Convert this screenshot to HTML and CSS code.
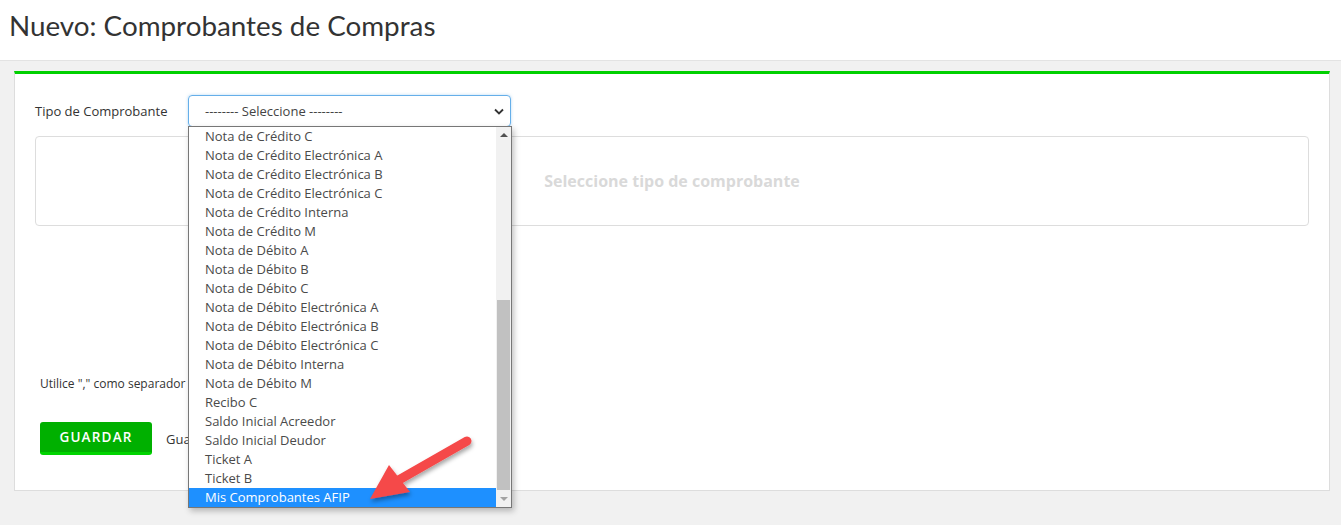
FILE: index.html
```html
<!DOCTYPE html>
<html lang="es">
<head>
    <meta charset="UTF-8">
    <title>Nuevo: Comprobantes de Compras</title>
    <link rel="stylesheet" href="styles.css">
</head>
<body>
    <div class="page-header">
        <h1>Nuevo: Comprobantes de Compras</h1>
    </div>
    <div class="content">
        <div class="box">
            <div class="form-row">
                <label class="form-label">Tipo de Comprobante</label>
                <div class="select-wrap">
                    <div class="select-box">
                        <span>-------- Seleccione --------</span>
                        <svg class="chevron" width="10" height="7" viewBox="0 0 10 7"><path d="M1 1.5 L5 5.5 L9 1.5" fill="none" stroke="#333" stroke-width="1.8"/></svg>
                    </div>
                    <div class="select-list">
                        <ul class="options">
                            <li>Nota de Crédito C</li>
                            <li>Nota de Crédito Electrónica A</li>
                            <li>Nota de Crédito Electrónica B</li>
                            <li>Nota de Crédito Electrónica C</li>
                            <li>Nota de Crédito Interna</li>
                            <li>Nota de Crédito M</li>
                            <li>Nota de Débito A</li>
                            <li>Nota de Débito B</li>
                            <li>Nota de Débito C</li>
                            <li>Nota de Débito Electrónica A</li>
                            <li>Nota de Débito Electrónica B</li>
                            <li>Nota de Débito Electrónica C</li>
                            <li>Nota de Débito Interna</li>
                            <li>Nota de Débito M</li>
                            <li>Recibo C</li>
                            <li>Saldo Inicial Acreedor</li>
                            <li>Saldo Inicial Deudor</li>
                            <li>Ticket A</li>
                            <li>Ticket B</li>
                            <li class="selected">Mis Comprobantes AFIP</li>
                        </ul>
                        <div class="scrollbar">
                            <div class="scroll-up"></div>
                            <div class="scroll-track"><div class="scroll-thumb"></div></div>
                            <div class="scroll-down"></div>
                        </div>
                    </div>
                </div>
            </div>

            <div class="placeholder-box">Seleccione tipo de comprobante</div>

            <p class="hint">Utilice "," como separador decimal</p>

            <div class="actions">
                <button class="btn-save">GUARDAR</button>
                <span class="save-note">Guardar y crear otro</span>
            </div>
        </div>
    </div>

    <!-- annotation arrow -->
    <svg class="annotation" width="130" height="80" viewBox="0 0 130 80">
        <defs>
            <filter id="shadow" x="-20%" y="-20%" width="140%" height="150%">
                <feDropShadow dx="1" dy="3" stdDeviation="2" flood-color="#000" flood-opacity="0.35"/>
            </filter>
        </defs>
        <g filter="url(#shadow)">
            <line x1="105" y1="10" x2="35" y2="50" stroke="#f54848" stroke-width="9" stroke-linecap="round"/>
            <polygon points="8,68 27,34 48,61" fill="#f54848"/>
        </g>
    </svg>
</body>
</html>
```

FILE: styles.css
```css
html, body {
    min-height: 525px;
}

body {
    margin: 0;
    background-color: #f1f1f1;
    font-family: "Open Sans", Arial, sans-serif;
    color: #333;
    position: relative;
}

.page-header {
    background: white;
    height: 60px;
    border-bottom: 1px solid #e3e3e3;
}

.page-header h1 {
    margin: 0;
    padding: 9px 0 0 9px;
    font-family: Lato, "Open Sans", sans-serif;
    font-weight: normal;
    font-size: 27.8px;
    color: #333;
}

.content {
    padding: 10px 11px 34px 14px;
}

.box {
    background: white;
    border: 1px solid #ddd;
    border-top: 3px solid #00d000;
    padding: 21px 20px 0 20px;
    height: 420px;
    box-sizing: border-box;
}

.form-row {
    display: flex;
    align-items: center;
}

.form-label {
    width: 153px;
    font-size: 13px;
    color: #333;
}

.select-wrap {
    position: relative;
    width: 323px;
}

.select-box {
    height: 30px;
    border: 1px solid #66afe9;
    border-radius: 4px;
    box-shadow: 0 0 3px rgba(102, 175, 233, 0.5);
    display: flex;
    align-items: center;
    justify-content: space-between;
    padding: 0 6px 0 16px;
    font-size: 13px;
    color: #444;
}

.select-list {
    position: absolute;
    top: 31px;
    left: 0;
    width: 322px;
    border: 1px solid #777;
    background: white;
    box-shadow: 2px 3px 6px rgba(0, 0, 0, 0.25);
    display: flex;
    z-index: 5;
}

.options {
    list-style: none;
    margin: 0;
    padding: 0;
    flex: 1;
}

.options li {
    height: 19px;
    line-height: 19px;
    padding-left: 16px;
    font-size: 13px;
    color: #4a4a4a;
}

.options li.selected {
    background-color: #1e90ff;
    color: white;
}

.scrollbar {
    width: 15px;
    background: #f1f1f1;
    display: flex;
    flex-direction: column;
}

.scroll-up,
.scroll-down {
    height: 17px;
    position: relative;
}

.scroll-up::after,
.scroll-down::after {
    content: "";
    position: absolute;
    left: 4px;
    border-left: 4px solid transparent;
    border-right: 4px solid transparent;
}

.scroll-up::after {
    top: 6px;
    border-bottom: 4px solid #505050;
}

.scroll-down::after {
    top: 7px;
    border-top: 4px solid #a3a3a3;
}

.scroll-track {
    flex: 1;
    display: flex;
    flex-direction: column;
    justify-content: flex-end;
    padding: 0 1px;
}

.scroll-thumb {
    height: 190px;
    background: #c1c1c1;
}

.placeholder-box {
    margin-top: 9px;
    height: 88px;
    border: 1px solid #ddd;
    border-radius: 4px;
    display: flex;
    align-items: center;
    justify-content: center;
    font-size: 16px;
    font-weight: bold;
    color: #d9d9d9;
}

.hint {
    margin: 149px 0 0 5px;
    font-size: 12px;
    color: #333;
}

.actions {
    margin: 30px 0 0 5px;
    display: flex;
    align-items: center;
}

.btn-save {
    width: 112px;
    height: 33px;
    background: #00b000;
    border: none;
    border-bottom: 3px solid #00d400;
    border-radius: 3px;
    color: white;
    font-family: "Open Sans", Arial, sans-serif;
    font-size: 13.5px;
    font-weight: 600;
    letter-spacing: 1.2px;
    cursor: pointer;
}

.save-note {
    margin-left: 14px;
    font-size: 13px;
}

.annotation {
    position: absolute;
    left: 362px;
    top: 431px;
    z-index: 10;
}
```
